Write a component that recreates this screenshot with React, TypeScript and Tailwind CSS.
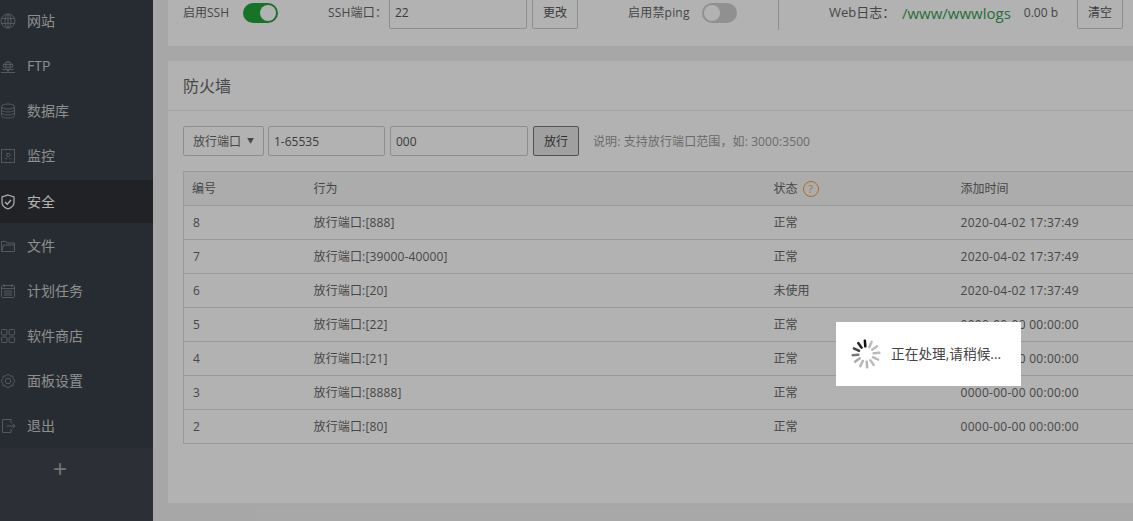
import React from "react";

function Icon({ children }: { children: React.ReactNode }) {
  return (
    <svg width="16" height="16" viewBox="0 0 16 16" fill="none" stroke="currentColor" strokeWidth="1" className="shrink-0">
      {children}
    </svg>
  );
}

const icons: Record<string, React.ReactNode> = {
  site: (
    <>
      <circle cx="8" cy="8" r="7" />
      <ellipse cx="8" cy="8" rx="3" ry="7" />
      <path d="M1.500 5.500h13M1.500 10.500h13M8 1v14" />
    </>
  ),
  ftp: (
    <>
      <path d="M3 9a5 5 0 0 1 10 0z" />
      <ellipse cx="8" cy="8" rx="2.200" ry="4.500" />
      <path d="M3 6.500h10M2.500 11.500h11M1 14.500h14M8 11.500v3" />
    </>
  ),
  db: (
    <>
      <ellipse cx="8" cy="3.500" rx="6.500" ry="2.500" />
      <path d="M1.500 3.500v9c0 1.400 2.900 2.500 6.500 2.500s6.500-1.100 6.500-2.500v-9" />
      <path d="M1.500 6.500c0 1.400 2.900 2.500 6.500 2.500s6.500-1.100 6.500-2.500M1.500 9.500c0 1.400 2.900 2.500 6.500 2.500s6.500-1.100 6.500-2.500" />
    </>
  ),
  monitor: (
    <>
      <rect x="1.500" y="1.500" width="13" height="13" />
      <path d="M6.500 5.500h3M5 10.500h2M9.500 10l1.500 1.500M7 8.500h2M7 5.500v3M10 6v2" />
    </>
  ),
  safe: (
    <>
      <path d="M8 1l6 2v5.500c0 3.200-2.600 5.200-6 6.500-3.400-1.300-6-3.300-6-6.500V3z" strokeWidth="1.200" />
      <path d="M5 8l2.200 2.200L11 6" strokeWidth="1.300" />
    </>
  ),
  file: (
    <>
      <path d="M1.500 13.500v-10h4.500l1 1.500h7.500v8.500z" />
      <path d="M1.500 13.500l2-6.500h11" />
    </>
  ),
  task: (
    <>
      <rect x="1.500" y="2.500" width="13" height="12" rx="1" />
      <path d="M4 1v3M12 1v3M1.500 5.500h13M4 8h8M4 10h8M4 12h8" />
    </>
  ),
  soft: (
    <>
      <rect x="1.500" y="1.500" width="5.500" height="5.500" rx="1" />
      <rect x="9" y="1.500" width="5.500" height="5.500" rx="1" />
      <rect x="1.500" y="9" width="5.500" height="5.500" rx="1" />
      <rect x="9" y="9" width="5.500" height="5.500" rx="1" />
    </>
  ),
  gear: (
    <>
      <path d="M8 1l2 2h2.800l.5 2.700L15 8l-1.700 2.300-.5 2.700H10l-2 2-2-2H3.200l-.5-2.700L1 8l1.700-2.300.5-2.700H6z" />
      <circle cx="8" cy="8" r="2.700" />
    </>
  ),
  exit: (
    <>
      <path d="M11 5V1.500H2.500v13H11V11" />
      <path d="M6.500 8H15M12.500 5.500L15 8l-2.500 2.500" />
    </>
  ),
};

const menu = [
  ["site", "网站"],
  ["ftp", "FTP"],
  ["db", "数据库"],
  ["monitor", "监控"],
  ["safe", "安全"],
  ["file", "文件"],
  ["task", "计划任务"],
  ["soft", "软件商店"],
  ["gear", "面板设置"],
  ["exit", "退出"],
];

const rows = [
  ["8", "放行端口:[888]", "正常", "2020-04-02 17:37:49"],
  ["7", "放行端口:[39000-40000]", "正常", "2020-04-02 17:37:49"],
  ["6", "放行端口:[20]", "未使用", "2020-04-02 17:37:49"],
  ["5", "放行端口:[22]", "正常", "0000-00-00 00:00:00"],
  ["4", "放行端口:[21]", "正常", "0000-00-00 00:00:00"],
  ["3", "放行端口:[8888]", "正常", "0000-00-00 00:00:00"],
  ["2", "放行端口:[80]", "正常", "0000-00-00 00:00:00"],
];

function Switch({ on }: { on: boolean }) {
  return (
    <div className={`flex h-[20px] w-[35px] items-center rounded-full p-[2px] ${on ? "justify-end bg-[#20a53a]" : "justify-start bg-[#cfcfcf]"}`}>
      <div className="h-[16px] w-[16px] rounded-full bg-white" />
    </div>
  );
}

function Spinner() {
  const shades = ["#111", "#bbb", "#bbb", "#bbb", "#bbb", "#bbb", "#b5b5b5", "#b5b5b5", "#aaa", "#777", "#444", "#222"];
  return (
    <svg width="30" height="30" viewBox="0 0 30 30" className="shrink-0">
      {shades.map((shade, i) => (
        <rect key={i} x="13.750" y="0.500" width="2.500" height="8" rx="1" fill={shade} transform={`rotate(${i * 30 - 5} 15 15)`} />
      ))}
    </svg>
  );
}

export default function App() {
  return (
    <div className="relative flex h-[521px] w-[1133px] overflow-hidden bg-[#f0f0f0] font-['Open_Sans','Noto_Sans_CJK_SC',sans-serif] text-[12px] text-[#666]">
      <aside className="flex h-full w-[153px] shrink-0 flex-col bg-[#394049]">
        <div className="-mt-[2px]">
          {menu.map(([key, label]) => {
            const active = key === "safe";
            return (
              <div key={key} className={`flex items-center gap-[11px] text-[14px] ${active ? "mt-[2px] h-[43px] bg-[#2f3236] text-white" : "h-[45px] text-[#ccc]"}`}>
                <span className={active ? "text-white" : "text-[#7a8087]"}>
                  <Icon>{icons[key]}</Icon>
                </span>
                <span>{label}</span>
              </div>
            );
          })}
        </div>
        <div className="flex flex-1 items-start justify-center bg-[#3f464e] pr-[33px] pt-[9px] text-[24px] leading-[24px] text-[#a5a9ad]">
          <span className="font-['Liberation_Sans']">+</span>
        </div>
      </aside>

      <main className="min-w-0 flex-1 pl-[15px]">
        <section className="h-[46px] w-[1000px] overflow-hidden bg-white pl-[15px]">
          <div className="-mt-[2px] flex h-[30px] items-center">
            <span className="w-[47px] whitespace-nowrap">启用SSH</span>
            <span className="ml-[13px]"><Switch on /></span>
            <span className="ml-[50px] w-[59px] whitespace-nowrap tracking-[0.2px]">SSH端口：</span>
            <div className="ml-[2px] flex h-[31px] w-[138px] shrink-0 items-center rounded-[2px] border border-[#ccc] px-[5px] text-[#555]">22</div>
            <button className="ml-[5px] h-[31px] w-[46px] shrink-0 rounded-[2px] border border-[#ccc] bg-white text-[12px] text-[#555]">更改</button>
            <span className="ml-[50px] w-[62px] whitespace-nowrap tracking-[0.2px]">启用禁ping</span>
            <span className="ml-[12px]"><Switch on={false} /></span>
            <div className="ml-[41px] h-[33px] w-px shrink-0 bg-[#ccc]" />
            <span className="ml-[50px] w-[62px] whitespace-nowrap text-[13px]">Web日志：</span>
            <span className="ml-[11px] whitespace-nowrap text-[15px] text-[#35a050]">/www/wwwlogs</span>
            <span className="ml-[13px] whitespace-nowrap">0.00 b</span>
            <button className="ml-[19px] h-[31px] w-[46px] shrink-0 rounded-[2px] border border-[#ccc] bg-white text-[12px] text-[#555]">清空</button>
          </div>
        </section>

        <section className="mt-[15px] h-[442px] w-[1000px] bg-white">
          <h2 className="flex h-[50px] items-center border-b border-[#eee] pl-[15px] text-[16px] font-normal text-[#666]">防火墙</h2>
          <div className="flex items-center pl-[15px] pt-[15px]">
            <div className="flex h-[30px] w-[81px] shrink-0 items-center justify-between rounded-[2px] border border-[#ccc] px-[9px] pt-[1px] text-[#666]">
              <span>放行端口</span>
              <span className="text-[7px]">▼</span>
            </div>
            <div className="ml-[4px] flex h-[30px] w-[117px] items-center rounded-[2px] border border-[#ccc] px-[5px] pt-[1px] text-[#555]">1-65535</div>
            <div className="ml-[5px] flex h-[30px] w-[138px] items-center rounded-[2px] border border-[#ccc] px-[5px] pt-[1px] text-[#555]">000</div>
            <button className="ml-[5px] h-[30px] w-[46px] rounded-[2px] border border-[#777] bg-[#e6e6e6] pt-[1px] text-[12px] text-[#444]">放行</button>
            <span className="ml-[14px] pt-[1px] tracking-[0.1px] text-[#999]">说明: 支持放行端口范围，如: 3000:3500</span>
          </div>

          <table className="ml-[15px] mt-[15px] w-[985px] table-fixed border-collapse border border-[#ddd]">
            <colgroup>
              <col className="w-[122px]" />
              <col className="w-[459px]" />
              <col className="w-[187px]" />
              <col />
            </colgroup>
            <thead>
              <tr className="h-[34px] border-b border-[#ddd] bg-[#f6f6f6] text-left">
                <th className="pl-[8px] font-normal">编号</th>
                <th className="pl-[8px] font-normal">行为</th>
                <th className="pl-[9px] font-normal">
                  <span className="inline-flex items-center gap-[5px]">
                    状态
                    <span className="flex h-[16px] w-[16px] items-center justify-center rounded-full border border-[#ff9933] text-[11px] leading-none text-[#f0ad4e]">?</span>
                  </span>
                </th>
                <th className="pl-[9px] font-normal">添加时间</th>
              </tr>
            </thead>
            <tbody>
              {rows.map((r) => (
                <tr key={r[0]} className="h-[34px] border-b border-[#ddd]">
                  <td className="pl-[9px]">{r[0]}</td>
                  <td className="pl-[8px] tracking-[0.15px]">{r[1]}</td>
                  <td className="pl-[9px]">{r[2]}</td>
                  <td className="pl-[9px] tracking-[0.27px]">{r[3]}</td>
                </tr>
              ))}
            </tbody>
          </table>
        </section>
      </main>

      <div className="absolute inset-0 bg-black/30" />

      <div className="absolute left-[836px] top-[322px] flex h-[64px] w-[185px] items-center gap-[10px] bg-white pl-[15px] text-[13.7px] text-[#444]">
        <Spinner />
        <span className="whitespace-nowrap">正在处理,请稍候...</span>
      </div>
    </div>
  );
}
